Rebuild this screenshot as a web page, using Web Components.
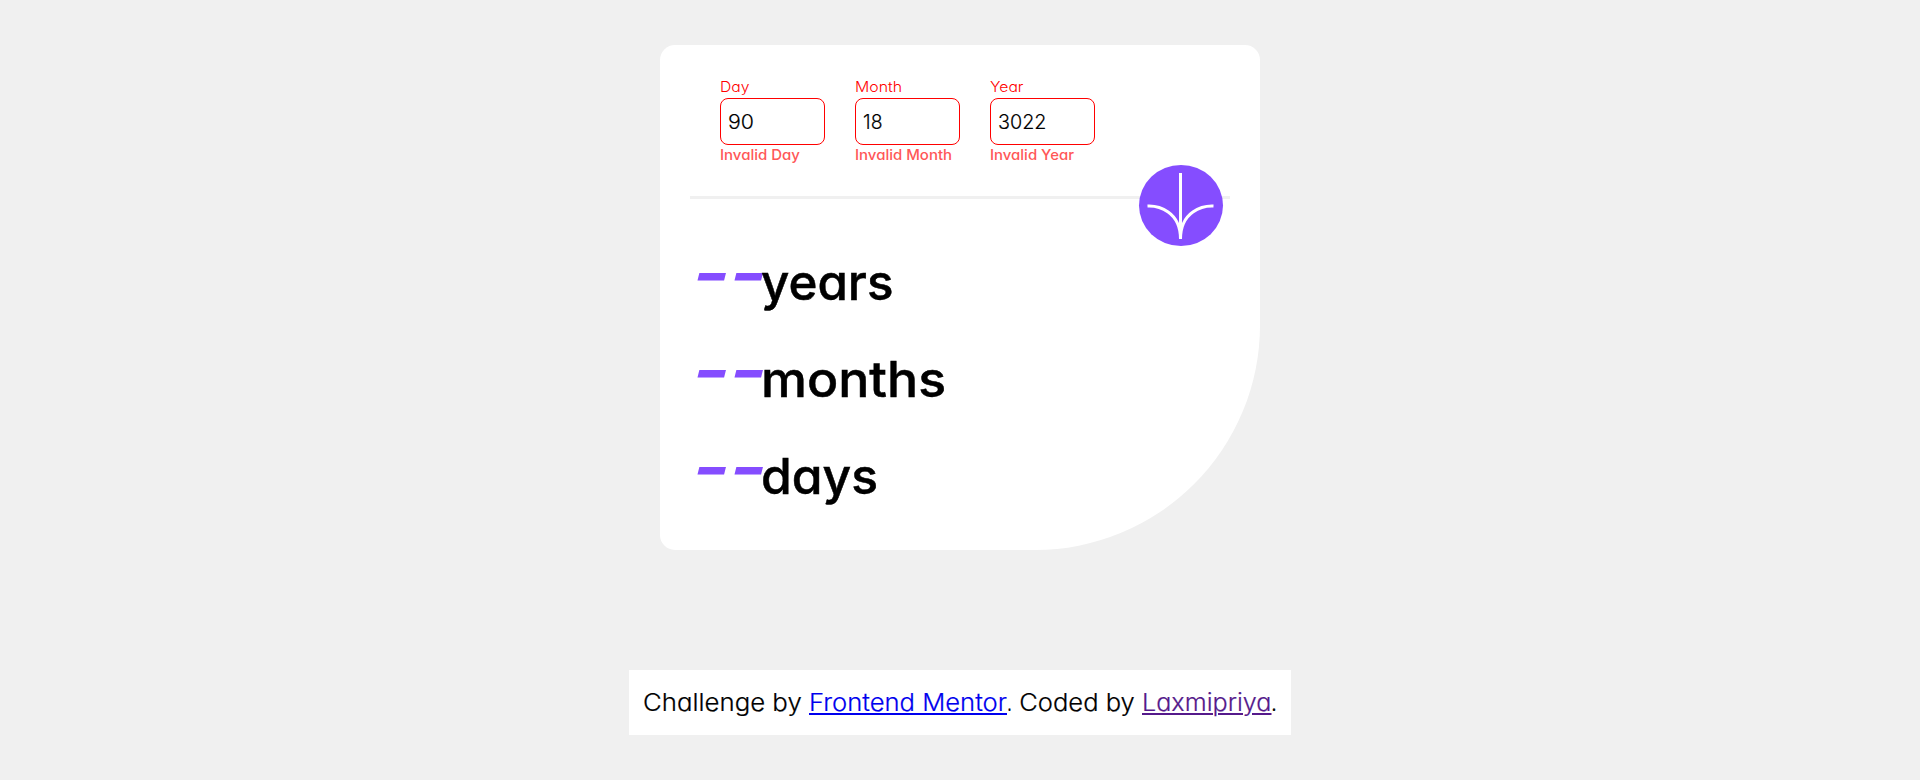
<!DOCTYPE html>
<html lang="en">
<head>
<meta charset="utf-8">
<title>Age calculator</title>
<style>
body{margin:0;background:#f0f0f0;font-family:Inter,"Open Sans",sans-serif;font-weight:300;font-feature-settings:"cv11","ss03"}
</style>
</head>
<body>
<age-app></age-app>
<script>
const mount=(el,html)=>{el.attachShadow({mode:'open'}).innerHTML=html};

// One line of text, stretched so that it fills the given width.
customElements.define('fit-text',class extends HTMLElement{
  connectedCallback(){
    mount(this,`<style>:host{display:inline-block;white-space:pre}span{display:inline-block;text-decoration:inherit;transform-origin:0 50%}</style><span><slot></slot></span>`);
    const w=+this.getAttribute('w'),s=this.shadowRoot.querySelector('span');
    s.style.transform=`scaleX(${w/s.getBoundingClientRect().width})`;
    this.style.width=w+'px';
  }
});

customElements.define('date-field',class extends HTMLElement{
  connectedCallback(){
    const a=k=>this.getAttribute(k);
    mount(this,`<style>
      :host{display:block;width:105px}
      .label{height:23px;line-height:23px;font-size:14.5px;color:#f00}
      .box{box-sizing:border-box;height:47px;border:1px solid #f00;border-radius:8px;padding-left:7px;line-height:46px;font-size:20px;color:#000;-webkit-text-stroke:.15px}
      .error{height:22px;line-height:20px;font-size:14.5px;font-weight:500;color:#ff5757}
    </style>
    <div class="label"><fit-text w="${a('lw')}">${a('label')}</fit-text></div>
    <div class="box"><fit-text w="${a('vw')}">${a('value')}</fit-text></div>
    <div class="error"><fit-text w="${a('ew')}">Invalid ${a('label')}</fit-text></div>`);
  }
});

customElements.define('submit-button',class extends HTMLElement{
  connectedCallback(){
    mount(this,`<style>
      :host{display:block;box-sizing:border-box;width:84px;height:81px;padding:8px 7px 7px;border-radius:50%;background:#854dff}
      svg{display:block}
    </style>
    <svg width="69" height="66" viewBox="0 0 46 44" fill="none" stroke="#fff" stroke-width="2"><path d="M1 22.019C8.333 21.686 23 25.616 23 44M23 44V0M45 22.019C37.667 21.686 23 25.616 23 44"/></svg>`);
  }
});

customElements.define('result-row',class extends HTMLElement{
  connectedCallback(){
    mount(this,`<style>
      :host{display:flex;height:97px;line-height:97px;font-size:50px;font-weight:500;color:#000}
      .dash{width:64px;color:#854dff;font-weight:900;font-style:italic;white-space:pre}
      .dash span{display:inline-block;transform-origin:0 50%;transform:translate(-4px,-9px) scaleX(1.56)}
      fit-text{position:relative;-webkit-text-stroke:.5px}
    </style>
    <div class="dash"><span>--</span></div><fit-text w="${this.getAttribute('w')}">${this.getAttribute('unit')}</fit-text>`);
  }
});

customElements.define('age-card',class extends HTMLElement{
  connectedCallback(){
    mount(this,`<style>
      :host{display:block;box-sizing:border-box;width:600px;height:505px;padding:30px;background:#fff;border-radius:15px 15px 225px 15px}
      .fields{display:flex;gap:30px;padding-left:30px;height:121px}
      .rule{position:relative;height:3px;background:#f0f0f0}
      submit-button{position:absolute;right:7px;top:-31px}
      .results{padding:35px 0 0 7px}
    </style>
    <div class="fields">
      <date-field label="Day" value="90" lw="29.5" vw="26" ew="80"></date-field>
      <date-field label="Month" value="18" lw="47" vw="19.5" ew="97"></date-field>
      <date-field label="Year" value="3022" lw="33.5" vw="48.5" ew="84"></date-field>
    </div>
    <div class="rule"><submit-button></submit-button></div>
    <div class="results">
      <result-row unit="years" w="132.5"></result-row>
      <result-row unit="months" w="185"></result-row>
      <result-row unit="days" w="117"></result-row>
    </div>`);
  }
});

customElements.define('credit-bar',class extends HTMLElement{
  connectedCallback(){
    mount(this,`<style>
      :host{display:flex;box-sizing:border-box;width:662px;height:65px;padding:0 14px;background:#fff;font-size:24px;line-height:66px;white-space:pre;color:#000;-webkit-text-stroke:.2px}
      a{color:#00e;text-decoration:underline;text-decoration-thickness:2px;text-underline-offset:2px}
      a.seen{color:#551a8b}
      a fit-text{text-decoration:inherit}
    </style>
    <fit-text w="166">Challenge by </fit-text><a href="#"><fit-text w="198">Frontend Mentor</fit-text></a><fit-text w="5">.</fit-text><fit-text w="130"> Coded by </fit-text><a class="seen" href="#"><fit-text w="129.5">Laxmipriya</fit-text></a><fit-text w="6">.</fit-text>`);
  }
});

customElements.define('age-app',class extends HTMLElement{
  connectedCallback(){
    mount(this,`<style>
      :host{display:flex;flex-direction:column;align-items:center;gap:120px;box-sizing:border-box;height:780px;padding-top:45px}
    </style><age-card></age-card><credit-bar></credit-bar>`);
  }
});
</script>
</body>
</html>
